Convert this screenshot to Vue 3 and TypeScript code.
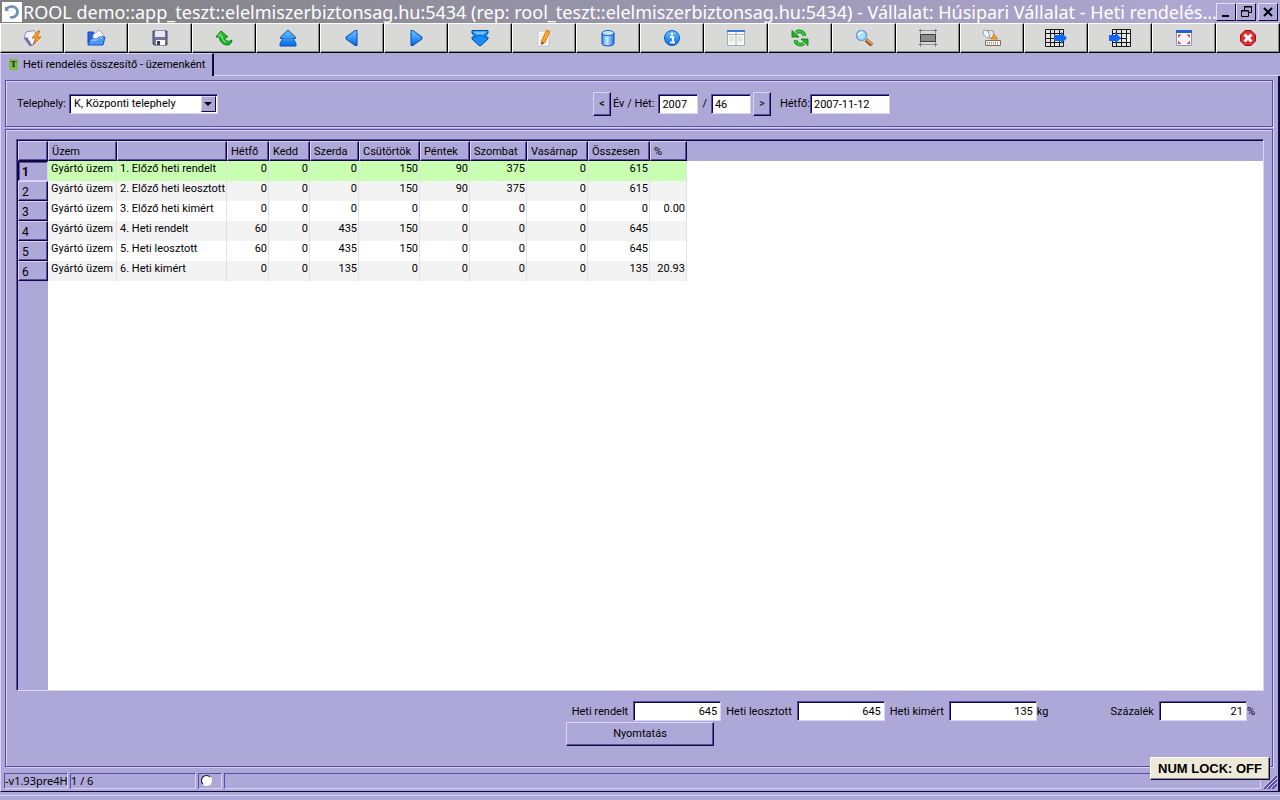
<script setup lang="ts">
import { ref } from 'vue'

interface Tool {
  icon: string
  label: string
}

const tools: Tool[] = [
  { icon: 'execute', label: 'Végrehajtás' },
  { icon: 'open', label: 'Megnyitás' },
  { icon: 'save', label: 'Mentés' },
  { icon: 'undo', label: 'Visszavonás' },
  { icon: 'first', label: 'Első' },
  { icon: 'prev', label: 'Előző' },
  { icon: 'next', label: 'Következő' },
  { icon: 'last', label: 'Utolsó' },
  { icon: 'edit', label: 'Szerkesztés' },
  { icon: 'database', label: 'Adatbázis' },
  { icon: 'info', label: 'Információ' },
  { icon: 'list', label: 'Lista' },
  { icon: 'refresh', label: 'Frissítés' },
  { icon: 'search', label: 'Keresés' },
  { icon: 'frame', label: 'Keret' },
  { icon: 'keyboard', label: 'Billentyűk' },
  { icon: 'export', label: 'Export' },
  { icon: 'import', label: 'Import' },
  { icon: 'fit', label: 'Méretezés' },
  { icon: 'close', label: 'Bezárás' },
]

const columns = ['Üzem', '', 'Hétfő', 'Kedd', 'Szerda', 'Csütörtök', 'Péntek', 'Szombat', 'Vasárnap', 'Összesen', '%']

const rows: string[][] = [
  ['Gyártó üzem', '1. Előző heti rendelt', '0', '0', '0', '150', '90', '375', '0', '615', ''],
  ['Gyártó üzem', '2. Előző heti leosztott', '0', '0', '0', '150', '90', '375', '0', '615', ''],
  ['Gyártó üzem', '3. Előző heti kimért', '0', '0', '0', '0', '0', '0', '0', '0', '0.00'],
  ['Gyártó üzem', '4. Heti rendelt', '60', '0', '435', '150', '0', '0', '0', '645', ''],
  ['Gyártó üzem', '5. Heti leosztott', '60', '0', '435', '150', '0', '0', '0', '645', ''],
  ['Gyártó üzem', '6. Heti kimért', '0', '0', '135', '0', '0', '0', '0', '135', '20.93'],
]

const selected = ref(0)
const site = ref('K, Központi telephely')
const year = ref('2007')
const week = ref('46')
const monday = ref('2007-11-12')
const ordered = ref('645')
const allotted = ref('645')
const measured = ref('135')
const percent = ref('21')

function shiftWeek(step: number) {
  week.value = String(Number(week.value) + step)
}
</script>

<template>
  <div class="window">
    <header class="titlebar">
      <svg class="app-icon" viewBox="0 0 20 20" aria-hidden="true">
        <rect width="20" height="20" fill="#fff" />
        <path d="M4.500 7C7 3.500 13 3.500 15 7.500C17 12 13 16.500 8 15" fill="none" stroke="#6f8fb3" stroke-width="2.600" />
        <path d="M3 4v5h4z" fill="#6f8fb3" />
      </svg>
      <h1>ROOL demo::app_teszt::elelmiszerbiztonsag.hu:5434 (rep: rool_teszt::elelmiszerbiztonsag.hu:5434) - Vállalat: Húsipari Vállalat - Heti rendelés...</h1>
      <div class="window-buttons">
        <button type="button" aria-label="Kis méret">
          <svg viewBox="0 0 16 14"><path d="M4 11h7" stroke="#000" stroke-width="2" /></svg>
        </button>
        <button type="button" aria-label="Előző méret">
          <svg viewBox="0 0 16 14"><path d="M6.500 6V1.500h7v6H11M6 2h8M3.500 5.500h7v6h-7zM3 6h8" fill="none" stroke="#000" /></svg>
        </button>
        <button type="button" class="shut" aria-label="Ablak bezárása">
          <svg viewBox="0 0 16 14"><path d="M4 3l8 8M12 3l-8 8" stroke="#000" stroke-width="2" /></svg>
        </button>
      </div>
    </header>

    <nav class="toolbar">
      <button v-for="tool in tools" :key="tool.icon" type="button" :aria-label="tool.label">
        <svg viewBox="0 0 24 20" aria-hidden="true">
          <g v-if="tool.icon === 'execute'">
            <path d="M6 4l8-1.500 3 5-4 9.500-3 1-6-8z" fill="#f1f2ff" stroke="#8c8cb8" />
            <path d="M4 10l6 8 2-1-5-8z" fill="#6c70b0" />
            <path d="M18 3l-6 7h4l-3 7 8-8h-4l3-6z" fill="#ffa51c" stroke="#c85a0a" stroke-width=".8" />
          </g>
          <g v-else-if="tool.icon === 'open'">
            <path d="M4 4h5l2 2v10H4z" fill="#2a68dd" stroke="#174bb8" />
            <path d="M9 7l6-5 4 4v7H9z" fill="#fff" stroke="#7ea7e6" />
            <path d="M4 17l2-6h7l2-2h6l-2 8z" fill="#4b9af8" stroke="#1550cc" />
            <path d="M7 12h6l2-2h4" stroke="#bcdcff" fill="none" />
          </g>
          <g v-else-if="tool.icon === 'save'">
            <path d="M5 3h14v14H6l-1-1z" fill="#70749a" stroke="#42466c" />
            <path d="M7 3h10v6H7z" fill="#e7e9f3" />
            <path d="M8 12h9v5H8z" fill="#fff" /><path d="M9 13h3v4H9z" fill="#343a60" />
          </g>
          <g v-else-if="tool.icon === 'undo'">
            <path d="M9 3L4 9h3.500c0 5 4 8 8 8 2.500 0 4-2 4.500-5-3 2-7 2-7-3h3z" fill="#25bb2e" stroke="#087a13" />
            <path d="M9 5L6.500 8H10c0 3 1 5 4 6" fill="none" stroke="#8df080" />
          </g>
          <g v-else-if="tool.icon === 'first'">
            <path d="M12 2l7.500 7v1.500H17l3 5V18H4v-2.500l3-5H4.500V9z" fill="url(#blue)" stroke="#0758bd" />
            <path d="M8 10.500h8" stroke="#2b86e0" />
          </g>
          <path v-else-if="tool.icon === 'prev'" d="M17 2.500v15h-2L6 11V9l9-6.500z" fill="url(#blue)" stroke="#054bb8" />
          <path v-else-if="tool.icon === 'next'" d="M7 2.500v15h2l9-6.500V9L9 2.500z" fill="url(#blue)" stroke="#054bb8" />
          <g v-else-if="tool.icon === 'last'">
            <path d="M4 2.500h16V5l-3 4h3v2l-7 6.500h-2L4 11V9h3L4 5z" fill="#198cf8" stroke="#054bb0" />
            <path d="M5 3.500h14l-4 3H9z" fill="#70c5ff" />
            <path d="M7 9l5-2 5 2" fill="none" stroke="#0b63cc" />
          </g>
          <g v-else-if="tool.icon === 'edit'">
            <path d="M6 3h11v15H6z" fill="#fff" stroke="#c4c1d4" />
            <path d="M8 6h6M8 9h5M8 12h7M8 15h7" stroke="#dddce8" />
            <path d="M9.500 13l5-11 3.500 1.500-5 11-3.500 2z" fill="#ffa21a" stroke="#c76d13" stroke-width=".7" />
            <path d="M9.500 14l2.500 1-2.500 1.500z" fill="#553718" />
          </g>
          <g v-else-if="tool.icon === 'database'">
            <path d="M6 5v11c1 2.500 11 2.500 12 0V5z" fill="url(#cyl)" stroke="#0a56c4" />
            <ellipse cx="12" cy="5" rx="6" ry="2.500" fill="#c3e4ff" stroke="#1460c8" />
          </g>
          <g v-else-if="tool.icon === 'info'">
            <circle cx="12" cy="10" r="7.500" fill="url(#blue)" stroke="#0c58b4" />
            <circle cx="12" cy="6" r="1.400" fill="#fff" />
            <path d="M10 9h3v5M10 14.500h5" fill="none" stroke="#fff" stroke-width="1.800" />
          </g>
          <g v-else-if="tool.icon === 'list'">
            <path d="M3.500 2.500h17v15h-17z" fill="#faf9ec" stroke="#9aaecb" />
            <path d="M3 3h18" stroke="#3878cf" stroke-width="2" />
            <path d="M12 4v13M4 6.500h16" stroke="#9cb5d2" />
            <path d="M5 9h5M5 11h5M5 13h4M14 9h4M14 11h5M14 13h4" stroke="#d9d6bc" />
          </g>
          <g v-else-if="tool.icon === 'refresh'">
            <path d="M8 4.500C12 2 16 4 16.500 8M16 15.500C12 18 8 16 7.500 12" fill="none" stroke="#0c8a1c" stroke-width="3.600" />
            <path d="M4 2.500v6.500h7zM20 17.500V11h-7z" fill="#22b428" stroke="#087617" stroke-width=".8" />
            <path d="M8 4.500C12 2 16 4 16.500 8M16 15.500C12 18 8 16 7.500 12" fill="none" stroke="#3fd03a" stroke-width="1.800" />
          </g>
          <g v-else-if="tool.icon === 'search'">
            <path d="M14 12l6 5" stroke="#945322" stroke-width="4" /><path d="M15 12l5 4" stroke="#efb475" stroke-width="1.500" />
            <circle cx="9.500" cy="7.500" r="5" fill="#abdfff" stroke="#6c9fd4" stroke-width="1.500" />
            <path d="M6.500 7c1-3 3-3 4-3" fill="none" stroke="#fff" stroke-width="1.500" />
          </g>
          <g v-else-if="tool.icon === 'frame'">
            <path d="M3 2.500h18M3 16.500h18M4.500 1v18M19.500 1v18" stroke="#9494a8" />
            <path d="M4.500 6.500h15v7h-15z" fill="#8c8c8c" stroke="#3c3c40" />
            <path d="M3 2.500h3M18 2.500h3M3 16.500h3M18 16.500h3" stroke="#62627a" />
          </g>
          <g v-else-if="tool.icon === 'keyboard'">
            <path d="M4 2l4 1 3 5-4 2-4-4z" fill="#eef5fc" stroke="#91a3b5" />
            <path d="M8 2l5 1 1 5-4 3z" fill="#e6e6e9" stroke="#999ca7" />
            <path d="M14 6l4 5h-7z" fill="#f79a24" stroke="#c16b12" stroke-width=".6" />
            <path d="M5.500 12.500h15v5h-15z" fill="#fffae6" stroke="#77716b" />
            <path d="M7 14.500h12M7 16h12" stroke="#8d8170" stroke-dasharray="1 1" />
          </g>
          <g v-else-if="tool.icon === 'export'">
            <path d="M1 1h19v18H1z" fill="#e4e4dc" />
            <path d="M1.500 1.500h18v17h-18zM1 5.500h19M1 10.500h19M1 14.500h19M6.500 1v18M10.500 1v18M15.500 1v18" fill="none" stroke="#171717" />
            <path d="M10 7h7V4l6 6-6 6v-3h-7z" fill="#1166fb" />
          </g>
          <g v-else-if="tool.icon === 'import'">
            <path d="M4 1h19v18H4z" fill="#e4e4dc" />
            <path d="M4.500 1.500h18v17h-18zM4 5.500h19M4 10.500h14M4 14.500h19M8.500 1v18M13.500 1v18M18.500 1v18" fill="none" stroke="#171717" />
            <path d="M19 6h3v8h-3z" fill="#f8f8f8" />
            <path d="M1 7h6V4l6 6-6 6v-3H1z" fill="#1166fb" />
          </g>
          <g v-else-if="tool.icon === 'fit'">
            <path d="M4.500 3.500h15v14h-15z" fill="#f8f6ff" stroke="#8797ce" />
            <path d="M4 3.500h16" stroke="#2463d5" stroke-width="3" />
            <path d="M6 6.500h3.500L6 10zM18 6.500h-3.500L18 10zM6 16h3.500L6 12.500zM18 16h-3.500l3.500-3.500z" fill="#e0483a" />
          </g>
          <g v-else>
            <path d="M9 2.500h6l4.500 4.500v6L15 17.500H9L4.500 13V7z" fill="#e42a31" stroke="#9e1018" />
            <path d="M8.500 6.500l7 7M15.500 6.500l-7 7" stroke="#fff" stroke-width="3" />
          </g>
        </svg>
      </button>
      <svg class="defs" aria-hidden="true">
        <linearGradient id="blue" x2="0" y2="1"><stop stop-color="#6bc4ff" /><stop offset="1" stop-color="#0869e8" /></linearGradient>
        <linearGradient id="cyl"><stop stop-color="#2683ea" /><stop offset=".4" stop-color="#d0edff" /><stop offset="1" stop-color="#1673e4" /></linearGradient>
      </svg>
    </nav>

    <div class="tabs">
      <button type="button" class="tab">
        <span class="tab-icon">T</span>
        Heti rendelés összesítő - üzemenként
      </button>
      <div class="tab-rest"></div>
    </div>

    <main class="page">
      <form class="group filters" @submit.prevent>
        <div class="field">
          <label for="site">Telephely:</label>
          <div class="combo">
            <select id="site" v-model="site" class="sunken">
              <option>K, Központi telephely</option>
            </select>
            <span class="combo-arrow"></span>
          </div>
        </div>
        <div class="field">
          <button type="button" class="raised step" aria-label="Előző hét" @click="shiftWeek(-1)">&lt;</button>
          <label for="year">Év / Hét:</label>
          <input id="year" v-model="year" class="sunken short" />
          <label for="week" class="slash">/</label>
          <input id="week" v-model="week" class="sunken short" />
          <button type="button" class="raised step after" aria-label="Következő hét" @click="shiftWeek(1)">&gt;</button>
          <label for="monday">Hétfő:</label>
          <input id="monday" v-model="monday" class="sunken date" />
        </div>
        <span></span>
      </form>

      <section class="group content">
        <div class="grid sunken">
          <table>
            <colgroup>
              <col class="w-num" /><col class="w-plant" /><col class="w-name" /><col class="w-mon" /><col class="w-tue" /><col class="w-wed" />
              <col class="w-thu" /><col class="w-fri" /><col class="w-sat" /><col class="w-sun" /><col class="w-sum" /><col class="w-pct" />
            </colgroup>
            <thead>
              <tr>
                <th></th>
                <th v-for="(name, i) in columns" :key="i" scope="col">{{ name }}</th>
              </tr>
            </thead>
            <tbody>
              <tr v-for="(row, r) in rows" :key="r" :class="{ current: r === selected }" @click="selected = r">
                <th scope="row">{{ r + 1 }}</th>
                <td v-for="(cell, c) in row" :key="c" :class="{ number: c > 1 }">{{ cell }}</td>
              </tr>
            </tbody>
          </table>
        </div>

        <div class="totals">
          <label for="ordered">Heti rendelt</label>
          <input id="ordered" v-model="ordered" class="sunken total" />
          <label for="allotted">Heti leosztott</label>
          <input id="allotted" v-model="allotted" class="sunken total" />
          <label for="measured">Heti kimért</label>
          <input id="measured" v-model="measured" class="sunken total" />
          <span class="unit kg">kg</span>
          <label for="percent">Százalék</label>
          <input id="percent" v-model="percent" class="sunken total" />
          <span class="unit">%</span>
        </div>
        <button type="button" class="raised print">Nyomtatás</button>
      </section>

      <footer class="status">
        <span class="cell version">-v1.93pre4H</span>
        <span class="cell position">1 / 6</span>
        <span class="cell lamp"><i></i></span>
        <span class="cell message"></span>
        <svg class="grip" viewBox="0 0 14 14" aria-hidden="true">
          <path d="M1 14L14 1M5 14l9-9M9 14l5-5" stroke="#5a4ca6" stroke-width="2" />
          <path d="M0 13L13 0M4 13l10-10M8 13l6-6" stroke="#dcd8f8" />
        </svg>
      </footer>
      <div class="numlock">NUM LOCK: OFF</div>
    </main>
    <div class="taskbar"></div>
  </div>
</template>

<style>
body {
  background: #aea8d9;
}
</style>

<style scoped>
.window {
  --face: #aea8d9;
  --light: #d8d4f6;
  --mid: #5a4ca6;
  --dark: #100838;
  display: flex;
  flex-direction: column;
  min-height: 100vh;
  background: var(--face);
  color: #000;
  font: 11px/14px Roboto, "Liberation Sans", Arial, sans-serif;
}
.window * {
  box-sizing: border-box;
}
button,
input,
select {
  margin: 0;
  border-radius: 0;
  color: inherit;
  font: inherit;
}
.titlebar {
  display: flex;
  align-items: center;
  height: 23px;
  padding: 0 2px;
  background: linear-gradient(90deg, #808080, #b1aad9);
}
.app-icon {
  flex: none;
  width: 20px;
  height: 20px;
}
h1 {
  flex: 1;
  min-width: 0;
  margin: 0 0 0 1px;
  overflow: hidden;
  color: #fff;
  font: 18px/22px "Noto Sans", Tahoma, sans-serif;
  white-space: nowrap;
}
.window-buttons {
  display: flex;
}
.window-buttons button {
  display: grid;
  place-items: center;
  width: 20px;
  height: 18px;
  padding: 0;
  border: 1px solid;
  border-color: #e4e0fb var(--dark) var(--dark) #e4e0fb;
  background: var(--face);
}
.window-buttons .shut {
  margin-left: 2px;
}
.window-buttons svg {
  width: 16px;
  height: 14px;
}
.toolbar {
  display: grid;
  grid-template-columns: repeat(20, 1fr);
}
.toolbar button {
  display: grid;
  place-items: center;
  height: 30px;
  padding: 0;
  border: 1px solid;
  border-color: #fff #000 #000 #fff;
  background: #d9d9d7;
  box-shadow: inset -1px -1px #8a8a8a;
}
.toolbar button svg {
  width: 24px;
  height: 20px;
}
.toolbar .defs {
  position: absolute;
  width: 0;
  height: 0;
}
.tabs {
  display: flex;
  height: 23px;
}
.tab {
  display: flex;
  align-items: center;
  width: 214px;
  padding: 0 0 1px 8px;
  border: 0;
  border-top: 1px solid var(--light);
  border-left: 1px solid var(--light);
  border-right: 2px solid var(--dark);
  background: var(--face);
  white-space: nowrap;
}
.tab-icon {
  width: 9px;
  height: 11px;
  margin-right: 5px;
  background: #7fb84c;
  color: #142808;
  font: bold 9px/11px "Liberation Serif", serif;
}
.tab-rest {
  flex: 1;
  border-bottom: 1px solid var(--light);
}
.page {
  position: relative;
  display: flex;
  flex: 1;
  flex-direction: column;
  padding: 4px 4px 2px;
  border-left: 1px solid var(--light);
  border-right: 2px solid var(--dark);
  border-bottom: 1px solid var(--dark);
}
.group {
  margin-right: 1px;
  border: 1px solid var(--mid);
  box-shadow: inset 1px 1px var(--light), 1px 1px var(--light);
}
.filters {
  display: flex;
  align-items: center;
  justify-content: space-between;
  height: 47px;
  padding: 0 7px 0 11px;
}
.field {
  display: flex;
  align-items: center;
}
.sunken {
  border: 1px solid;
  border-color: var(--mid) var(--light) var(--light) var(--mid);
  background: #fff;
  box-shadow: inset 1px 1px var(--dark);
}
.raised {
  padding: 0;
  border: 1px solid;
  border-color: var(--light) var(--dark) var(--dark) var(--light);
  background: var(--face);
  box-shadow: inset -1px -1px var(--mid);
}
input.sunken {
  height: 20px;
  padding: 1px 3px 0;
}
.combo {
  position: relative;
  margin-left: 3px;
}
.combo select {
  display: block;
  width: 149px;
  height: 20px;
  padding: 1px 18px 0 4px;
  appearance: none;
}
.combo-arrow {
  position: absolute;
  top: 2px;
  right: 2px;
  display: grid;
  place-items: center;
  width: 15px;
  height: 16px;
  border: 1px solid;
  border-color: var(--light) var(--dark) var(--dark) var(--light);
  background: var(--face);
  pointer-events: none;
}
.combo-arrow::after {
  content: "";
  border: 4px solid transparent;
  border-top-color: #000;
  border-bottom: 0;
}
label,
.unit {
  padding-top: 1px;
}
.step {
  width: 18px;
  height: 24px;
  margin-right: 2px;
}
.step.after {
  margin: 0 9px 0 2px;
}
.short {
  width: 40px;
  margin-left: 4px;
}
.slash {
  margin-left: 4px;
}
.date {
  width: 80px;
}
.content {
  display: flex;
  flex: 1;
  flex-direction: column;
  margin-top: 2px;
  padding: 9px 8px 20px 10px;
}
.grid {
  flex: 1;
  padding: 1px 0 0 1px;
  background:
    linear-gradient(var(--face), var(--face)) 0 0 / 100% 21px no-repeat,
    linear-gradient(var(--face), var(--face)) 0 0 / 31px 100% no-repeat,
    #fff;
}
table {
  table-layout: fixed;
  width: 669px;
  border-collapse: separate;
  border-spacing: 0;
}
.w-num { width: 30px; }
.w-plant { width: 69px; }
.w-name { width: 110px; }
.w-mon { width: 42px; }
.w-tue { width: 41px; }
.w-wed { width: 49px; }
.w-thu { width: 61px; }
.w-fri { width: 50px; }
.w-sat { width: 57px; }
.w-sun { width: 61px; }
.w-sum { width: 62px; }
.w-pct { width: 37px; }
th,
td {
  height: 20px;
  padding: 1px 3px 0;
  white-space: nowrap;
}
th {
  border: 1px solid;
  border-color: var(--light) var(--dark) var(--dark) var(--light);
  background: var(--face);
  box-shadow: inset -1px -1px var(--mid);
  font-weight: normal;
  text-align: left;
}
tbody th {
  font-size: 12px;
}
td {
  border-right: 1px solid #e2e2e2;
  vertical-align: top;
}
tbody tr:nth-child(even) {
  background: #f3f3f3;
}
tbody tr.current {
  background: #c8ffb0;
}
.current th {
  border-color: var(--dark) var(--light) var(--light) var(--dark);
  box-shadow: inset 1px 1px var(--mid);
  font-weight: bold;
}
.number {
  padding-right: 1px;
  text-align: right;
}
.totals {
  display: flex;
  align-items: center;
  justify-content: flex-end;
  margin-top: 10px;
  padding-right: 9px;
}
.totals input.total {
  width: 88px;
  margin: 0 5px;
  text-align: right;
}
.totals .unit {
  margin-left: -5px;
}
.totals .kg {
  margin-right: 62px;
}
.print {
  align-self: center;
  width: 148px;
  height: 24px;
  margin-top: 1px;
}
.status {
  display: flex;
  gap: 2px;
  height: 16px;
  margin: 6px -3px 0 -1px;
  font: 11px/14px "Noto Sans", Tahoma, sans-serif;
}
.cell {
  border: 1px solid;
  border-color: var(--mid) var(--light) var(--light) var(--mid);
  white-space: nowrap;
}
.version {
  width: 64px;
}
.position {
  width: 126px;
}
.lamp {
  width: 24px;
  padding: 1px 2px;
}
.lamp i {
  display: block;
  width: 11px;
  height: 11px;
  border: 1px solid;
  border-color: var(--dark) #fff #fff var(--dark);
  border-radius: 50%;
  background: #fff;
}
.message {
  flex: 1;
}
.grip {
  align-self: flex-end;
  width: 14px;
  height: 14px;
}
.numlock {
  position: absolute;
  right: 8px;
  bottom: 11px;
  padding: 3px 7px 2px;
  border: 1px solid;
  border-color: #fff var(--dark) var(--dark) #fff;
  background: #ece9d8;
  box-shadow: inset -1px -1px #8a8a8a;
  font: bold 13px/16px "Liberation Sans", Arial, sans-serif;
}
.taskbar {
  height: 8px;
  padding-top: 3px;
}
.taskbar::after {
  content: "";
  display: block;
  border-top: 1px solid var(--light);
}
</style>
